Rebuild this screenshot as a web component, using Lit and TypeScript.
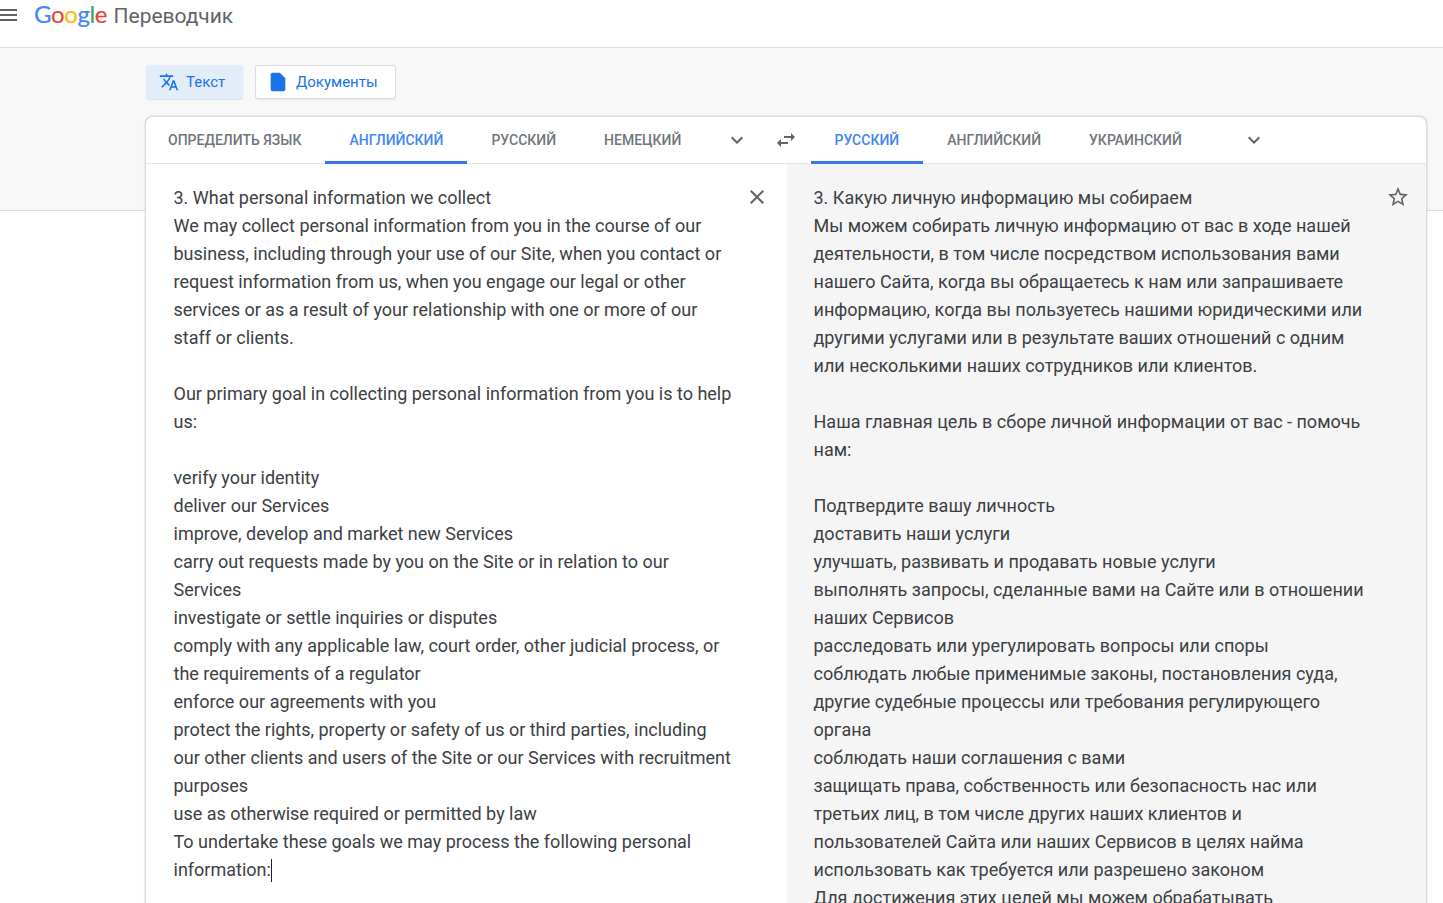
import { LitElement, html, css, svg } from "lit";
import { customElement } from "lit/decorators.js";

const LEFT = [
  "3. What personal information we collect",
  "We may collect personal information from you in the course of our",
  "business, including through your use of our Site, when you contact or",
  "request information from us, when you engage our legal or other",
  "services or as a result of your relationship with one or more of our",
  "staff or clients.",
  "",
  "Our primary goal in collecting personal information from you is to help",
  "us:",
  "",
  "verify your identity",
  "deliver our Services",
  "improve, develop and market new Services",
  "carry out requests made by you on the Site or in relation to our",
  "Services",
  "investigate or settle inquiries or disputes",
  "comply with any applicable law, court order, other judicial process, or",
  "the requirements of a regulator",
  "enforce our agreements with you",
  "protect the rights, property or safety of us or third parties, including",
  "our other clients and users of the Site or our Services with recruitment",
  "purposes",
  "use as otherwise required or permitted by law",
  "To undertake these goals we may process the following personal",
];

const RIGHT = [
  "3. Какую личную информацию мы собираем",
  "Мы можем собирать личную информацию от вас в ходе нашей",
  "деятельности, в том числе посредством использования вами",
  "нашего Сайта, когда вы обращаетесь к нам или запрашиваете",
  "информацию, когда вы пользуетесь нашими юридическими или",
  "другими услугами или в результате ваших отношений с одним",
  "или несколькими наших сотрудников или клиентов.",
  "",
  "Наша главная цель в сборе личной информации от вас - помочь",
  "нам:",
  "",
  "Подтвердите вашу личность",
  "доставить наши услуги",
  "улучшать, развивать и продавать новые услуги",
  "выполнять запросы, сделанные вами на Сайте или в отношении",
  "наших Сервисов",
  "расследовать или урегулировать вопросы или споры",
  "соблюдать любые применимые законы, постановления суда,",
  "другие судебные процессы или требования регулирующего",
  "органа",
  "соблюдать наши соглашения с вами",
  "защищать права, собственность или безопасность нас или",
  "третьих лиц, в том числе других наших клиентов и",
  "пользователей Сайта или наших Сервисов в целях найма",
  "использовать как требуется или разрешено законом",
  "Для достижения этих целей мы можем обрабатывать",
];

const chevron = svg`<path d="M7.4 8.6 12 13.2l4.6-4.6L18 10l-6 6-6-6z"/>`;

@customElement("app-root")
export class AppRoot extends LitElement {
  static styles = css`
    :host {
      display: block;
      height: 903px;
      overflow: hidden;
      background: #fff;
      font-family: Roboto, "Liberation Sans", sans-serif;
      color: #3c4043;
    }
    .header {
      height: 47px;
      border-bottom: 1px solid #dadce0;
      display: flex;
      align-items: flex-start;
    }
    .menu {
      width: 17px;
      height: 12px;
      margin-top: 9px;
      fill: #5f6368;
      flex: none;
    }
    .logo {
      margin-left: 17px;
      display: flex;
      align-items: baseline;
      line-height: 28px;
      white-space: nowrap;
    }
    .google {
      font-family: Lato, sans-serif;
      font-size: 24px;
      letter-spacing: -0.4px;
      -webkit-text-stroke: 0.2px currentColor;
    }
    .b { color: #4285f4; }
    .r { color: #ea4335; }
    .y { color: #fbbc05; }
    .g { color: #34a853; }
    .product {
      margin-left: 6.5px;
      font-size: 21px;
      color: #5f6368;
    }
    .main {
      height: 855px;
      padding: 17px 16px 0 145px;
      box-sizing: border-box;
      background: linear-gradient(#f8f8f8 162px, #dadce0 162px, #dadce0 163px, #fff 163px);
    }
    .modes {
      display: flex;
      gap: 12px;
      margin-bottom: 17px;
      padding-left: 1px;
    }
    .mode {
      height: 34px;
      box-sizing: border-box;
      display: flex;
      align-items: center;
      border-radius: 3px;
      font-size: 15px;
      color: #1a73e8;
      background: #fff;
      border: 1px solid #dadce0;
    }
    .mode svg { fill: #1a73e8; flex: none; }
    .mode.on {
      width: 97px;
      padding-left: 12px;
      gap: 7px;
      background: #e3ecf9;
      border-color: #e3ecf9;
      box-shadow: 0 1px 1px rgba(60, 64, 67, 0.12);
    }
    .mode.off {
      width: 141px;
      padding-left: 11px;
      gap: 7px;
      box-shadow: 0 1px 1px rgba(60, 64, 67, 0.1);
    }
    .card {
      width: 1282px;
      height: 800px;
      box-sizing: border-box;
      background: #fff;
      border: 1px solid #dadce0;
      border-radius: 8px 8px 0 0;
      box-shadow: 0 0 2px rgba(60, 64, 67, 0.3);
      overflow: hidden;
    }
    .tabs {
      height: 46px;
      display: flex;
      border-bottom: 1px solid #e4e6e8;
      box-sizing: content-box;
    }
    .tabset {
      display: flex;
      align-items: stretch;
    }
    .tabset.left { width: 664.5px; }
    .tab {
      padding: 0 24px;
      display: flex;
      align-items: center;
      font-size: 14px;
      font-weight: 500;
      color: #70757a;
      border-bottom: 3px solid transparent;
      margin-bottom: -1px;
      padding-top: 2px;
      box-sizing: border-box;
      white-space: nowrap;
    }
    .tab.first { padding-left: 22px; padding-right: 23.5px; }
    .tab.first + .tab { padding-left: 24.5px; }
    .tab.on {
      color: #4285f4;
      border-bottom-color: #3b78e7;
    }
    .icon {
      align-self: center;
      fill: #5f6368;
      flex: none;
    }
    .chev1 { margin-left: 20px; }
    .swap { margin-left: 25px; }
    .chev2 { margin-left: 36px; }
    .panes {
      display: grid;
      grid-template-columns: 641px 1fr;
      height: 752px;
    }
    .pane {
      padding-top: 20px;
      font-size: 18px;
      line-height: 28px;
      color: #3c4043;
      display: flex;
      align-items: flex-start;
    }
    .pane.src { padding-left: 27.5px; }
    .pane.dst { padding-left: 26.5px; background: #f5f5f5; }
    .lines { flex: 1; min-width: 0; }
    .line { height: 28px; white-space: nowrap; }
    .caret {
      display: inline-block;
      width: 1px;
      height: 23px;
      background: #202124;
      vertical-align: -6px;
    }
    .act { flex: none; fill: #5f6368; margin-top: 1px; }
    .close { margin-right: 18px; }
    .star { margin-right: 16px; }
  `;

  private lines(list: string[]) {
    return list.map((l) => html`<div class="line">${l}</div>`);
  }

  render() {
    return html`
      <div class="header">
        <svg class="menu" viewBox="0 0 17 12"><rect width="17" height="2" y="0"/><rect width="17" height="2" y="5"/><rect width="17" height="2" y="10"/></svg>
        <div class="logo">
          <span class="google"><span class="b">G</span><span class="r">o</span><span class="y">o</span><span class="b">g</span><span class="g">l</span><span class="r">e</span></span>
          <span class="product">Переводчик</span>
        </div>
      </div>
      <div class="main">
        <div class="modes">
          <div class="mode on">
            <svg width="20" height="20" viewBox="0 0 24 24"><path d="M12.87 15.07l-2.54-2.51.03-.03A17.52 17.52 0 0 0 14.07 6H17V4h-7V2H8v2H1v2h11.17A15.7 15.7 0 0 1 9 11.35 15.7 15.7 0 0 1 6.69 8h-2a17.6 17.6 0 0 0 2.98 4.56l-5.09 5.02L4 19l5-5 3.11 3.11.76-2.04zM18.5 10h-2L12 22h2l1.12-3h4.75L21 22h2l-4.5-12zm-2.62 7l1.62-4.33L19.12 17h-3.24z"/></svg>
            <span>Текст</span>
          </div>
          <div class="mode off">
            <svg width="22" height="22" viewBox="0 0 24 24"><path d="M14 2H6c-1.1 0-2 .9-2 2v16c0 1.1.9 2 2 2h12c1.1 0 2-.9 2-2V8l-6-6z"/></svg>
            <span>Документы</span>
          </div>
        </div>
        <div class="card">
          <div class="tabs">
            <div class="tabset left">
              <div class="tab first">ОПРЕДЕЛИТЬ ЯЗЫК</div>
              <div class="tab on">АНГЛИЙСКИЙ</div>
              <div class="tab">РУССКИЙ</div>
              <div class="tab">НЕМЕЦКИЙ</div>
              <svg class="icon chev1" width="24" height="24" viewBox="0 0 24 24">${chevron}</svg>
              <svg class="icon swap" width="24" height="24" viewBox="0 0 24 24"><path d="M6.99 11 3 15l3.99 4v-3H14v-2H6.99v-3zM21 9l-3.99-4v3H10v2h7.01v3L21 9z"/></svg>
            </div>
            <div class="tabset right">
              <div class="tab on">РУССКИЙ</div>
              <div class="tab">АНГЛИЙСКИЙ</div>
              <div class="tab">УКРАИНСКИЙ</div>
              <svg class="icon chev2" width="24" height="24" viewBox="0 0 24 24">${chevron}</svg>
            </div>
          </div>
          <div class="panes">
            <div class="pane src">
              <div class="lines">
                ${this.lines(LEFT)}
                <div class="line">information:<span class="caret"></span></div>
              </div>
              <svg class="act close" width="24" height="24" viewBox="0 0 24 24"><path d="M19 6.41 17.59 5 12 10.59 6.41 5 5 6.41 10.59 12 5 17.59 6.41 19 12 13.41 17.59 19 19 17.59 13.41 12z"/></svg>
            </div>
            <div class="pane dst">
              <div class="lines">${this.lines(RIGHT)}</div>
              <svg class="act star" width="24" height="24" viewBox="0 0 24 24"><path d="M22 9.24l-7.19-.62L12 2 9.19 8.63 2 9.24l5.46 4.73L5.82 21 12 17.27 18.18 21l-1.63-7.03L22 9.24zM12 15.4l-3.76 2.27 1-4.28-3.32-2.88 4.38-.38L12 6.1l1.71 4.04 4.38.38-3.32 2.88 1 4.28L12 15.4z"/></svg>
            </div>
          </div>
        </div>
      </div>
    `;
  }
}
